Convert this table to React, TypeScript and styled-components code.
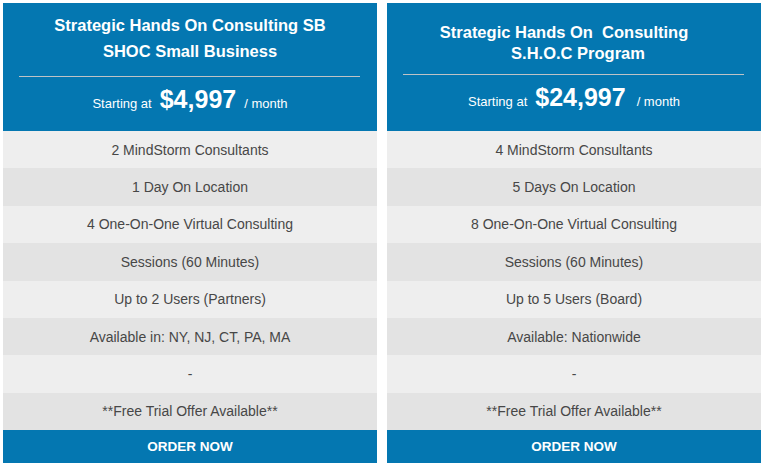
import React from "react";
import styled, { createGlobalStyle } from "styled-components";

const Global = createGlobalStyle`
  html, body { margin: 0; padding: 0; background: #ffffff; }
  body { font-family: "Liberation Sans", Arial, sans-serif; }
  * { box-sizing: border-box; }
`;

const Page = styled.div`
  display: flex;
  gap: 10px;
  padding: 3px;
  align-items: flex-start;
`;

const Card = styled.div`
  width: 374px;
  display: flex;
  flex-direction: column;
`;

const Header = styled.div`
  height: 128px;
  background: #0477b1;
  color: #ffffff;
  display: flex;
  flex-direction: column;
  align-items: center;
`;

const Title = styled.h3<{ $top: number; $lh: number }>`
  margin: ${(p) => p.$top}px 0 0;
  font-size: 16.5px;
  font-weight: bold;
  line-height: ${(p) => p.$lh}px;
  text-align: center;
  width: 100%;
`;

const TitleLine = styled.span<{ $padL?: number; $padR?: number }>`
  display: block;
  white-space: pre;
  padding-left: ${(p) => p.$padL ?? 0}px;
  padding-right: ${(p) => p.$padR ?? 0}px;
`;

const Divider = styled.hr<{ $gap: number }>`
  align-self: stretch;
  margin: ${(p) => p.$gap}px 17px 0 16px;
  border: 0;
  height: 1px;
  background: #bfc3c6;
`;

const PriceRow = styled.div<{ $gap: number }>`
  margin-top: ${(p) => p.$gap}px;
  display: flex;
  align-items: baseline;
  justify-content: center;
  font-size: 13px;
  line-height: 25px;
  white-space: nowrap;
`;

const Price = styled.span`
  font-size: 25px;
  font-weight: bold;
  margin: 0 8px;
`;

const Suffix = styled.span<{ $extra: number }>`
  margin-left: ${(p) => p.$extra}px;
`;

const Row = styled.div<{ $alt: boolean }>`
  height: 37.375px;
  display: flex;
  align-items: center;
  justify-content: center;
  background: ${(p) => (p.$alt ? "#e3e3e3" : "#eeeeee")};
  color: #474747;
  font-size: 14px;
`;

const OrderButton = styled.a`
  height: 33px;
  display: flex;
  align-items: center;
  justify-content: center;
  background: #0477b1;
  color: #ffffff;
  font-weight: bold;
  font-size: 13.5px;
  text-decoration: none;
  cursor: pointer;
`;

type Plan = {
  lines: { text: string; padL?: number; padR?: number }[];
  titleTop: number;
  lineHeight: number;
  dividerGap: number;
  priceGap: number;
  price: string;
  suffixExtra: number;
  features: string[];
};

const plans: Plan[] = [
  {
    lines: [
      { text: "Strategic Hands On Consulting SB" },
      { text: "SHOC Small Business" },
    ],
    titleTop: 9,
    lineHeight: 26,
    dividerGap: 12,
    priceGap: 10,
    price: "$4,997",
    suffixExtra: 0,
    features: [
      "2 MindStorm Consultants",
      "1 Day On Location",
      "4 One-On-One Virtual Consulting",
      "Sessions (60 Minutes)",
      "Up to 2 Users (Partners)",
      "Available in: NY, NJ, CT, PA, MA",
      "-",
      "**Free Trial Offer Available**",
    ],
  },
  {
    lines: [
      { text: "Strategic Hands On\u00a0 Consulting", padR: 20 },
      { text: "S.H.O.C Program", padL: 8 },
    ],
    titleTop: 18.5,
    lineHeight: 21,
    dividerGap: 10.5,
    priceGap: 9.8,
    price: "$24,997",
    suffixExtra: 3,
    features: [
      "4 MindStorm Consultants",
      "5 Days On Location",
      "8 One-On-One Virtual Consulting",
      "Sessions (60 Minutes)",
      "Up to 5 Users (Board)",
      "Available: Nationwide",
      "-",
      "**Free Trial Offer Available**",
    ],
  },
];

export default function App() {
  return (
    <>
      <Global />
      <Page>
        {plans.map((plan, i) => (
          <Card key={i}>
            <Header>
              <Title $top={plan.titleTop} $lh={plan.lineHeight}>
                {plan.lines.map((l, j) => (
                  <TitleLine key={j} $padL={l.padL} $padR={l.padR}>
                    {l.text}
                  </TitleLine>
                ))}
              </Title>
              <Divider $gap={plan.dividerGap} />
              <PriceRow $gap={plan.priceGap}>
                <span>Starting at</span>
                <Price>{plan.price}</Price>
                <Suffix $extra={plan.suffixExtra}>/ month</Suffix>
              </PriceRow>
            </Header>
            {plan.features.map((f, j) => (
              <Row key={j} $alt={j % 2 === 1}>
                {f}
              </Row>
            ))}
            <OrderButton>ORDER NOW</OrderButton>
          </Card>
        ))}
      </Page>
    </>
  );
}
